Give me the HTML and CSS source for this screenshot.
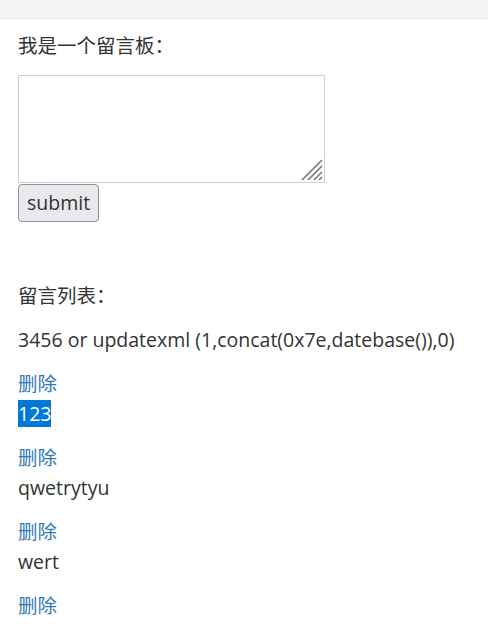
FILE: index.html
```html
<!DOCTYPE html>
<html lang="zh">
<head>
<meta charset="utf-8">
<title>留言板</title>
<link rel="stylesheet" href="styles.css">
</head>
<body>
<div class="topbar"></div>
<main class="page">
  <form class="board">
    <p class="title">我是一个留言板：</p>
    <div class="field">
      <textarea class="input" name="msg"></textarea>
      <svg class="grip" width="22" height="22" viewBox="0 0 22 22">
        <path d="M1 21 L21 1 M7 21 L21 7 M13 21 L21 13 M18 21 L21 18" stroke="#777" stroke-width="1.6" fill="none"/>
      </svg>
    </div>
    <button class="btn" type="button">submit</button>
  </form>
  <section class="list">
    <p class="title">留言列表：</p>
    <p class="msg">3456 or updatexml (1,concat(0x7e,datebase()),0)</p>
    <p class="item"><a href="#" class="del">删除</a><br><span class="sel">123</span></p>
    <p class="item"><a href="#" class="del">删除</a><br>qwetrytyu</p>
    <p class="item"><a href="#" class="del">删除</a><br>wert</p>
    <p class="item"><a href="#" class="del">删除</a></p>
  </section>
</main>
</body>
</html>
```
FILE: styles.css
```css
html, body {
  margin: 0;
  padding: 0;
  background: #fff;
}
body {
  font-family: "Open Sans", "Noto Sans CJK SC", sans-serif;
  font-size: 19.5px;
  line-height: 30px;
  color: #333;
}
.topbar {
  height: 18px;
  background: #f5f5f5;
  border-bottom: 1px solid #e7e7e7;
}
.page {
  padding: 12px 18px 0;
}
.board {
  display: flex;
  flex-direction: column;
  align-items: flex-start;
  margin: 0;
}
p {
  margin: 0 0 14px;
}
.field {
  position: relative;
  width: 307px;
  height: 108px;
}
.input {
  display: block;
  box-sizing: border-box;
  width: 307px;
  height: 108px;
  margin: 0;
  padding: 2px;
  border: 1px solid #cfcfcf;
  resize: none;
  font: inherit;
  background: #fff;
}
.grip {
  position: absolute;
  right: 2px;
  bottom: 2px;
}
.btn {
  margin-top: 1px;
  box-sizing: border-box;
  height: 38px;
  padding: 0 8px;
  font: inherit;
  line-height: 30px;
  color: #333;
  background: #e9e9ed;
  border: 1px solid #8f8f9d;
  border-radius: 4px;
}
.list {
  margin-top: 59px;
}
.del {
  color: #337ab7;
  text-decoration: none;
}
.sel {
  background: #0078d7;
  color: #fff;
}
```
